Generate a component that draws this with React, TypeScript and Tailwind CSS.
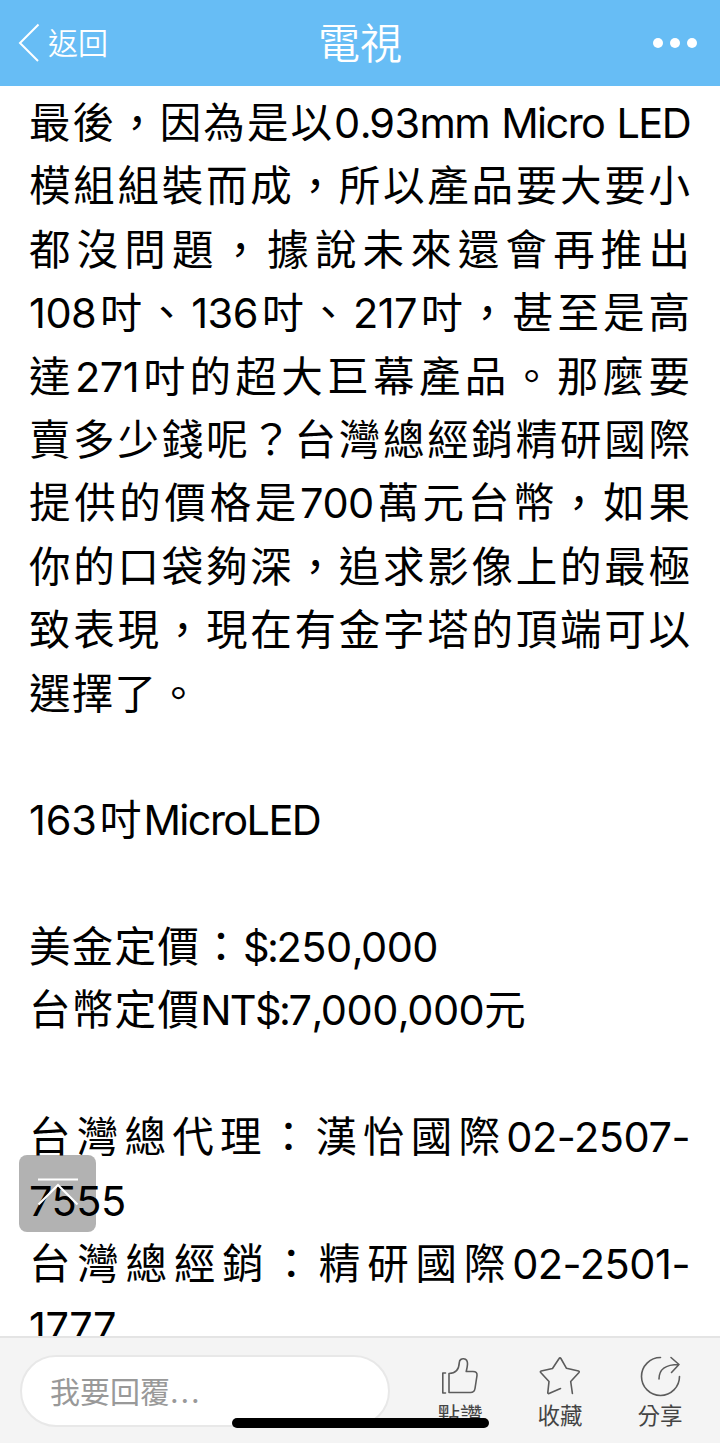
import type { ReactNode } from 'react';

type Line = { text: string; fill?: boolean };

const lines: Line[] = [
  { text: '最後，因為是以0.93mm Micro LED', fill: true },
  { text: '模組組裝而成，所以產品要大要小', fill: true },
  { text: '都沒問題，據說未來還會再推出', fill: true },
  { text: '108吋、136吋、217吋，甚至是高', fill: true },
  { text: '達271吋的超大巨幕產品。那麼要', fill: true },
  { text: '賣多少錢呢？台灣總經銷精研國際', fill: true },
  { text: '提供的價格是700萬元台幣，如果', fill: true },
  { text: '你的口袋夠深，追求影像上的最極', fill: true },
  { text: '致表現，現在有金字塔的頂端可以', fill: true },
  { text: '選擇了。' },
  { text: '' },
  { text: '163吋MicroLED' },
  { text: '' },
  { text: '美金定價：$:250,000' },
  { text: '台幣定價NT$:7,000,000元' },
  { text: '' },
  { text: '台灣總代理：漢怡國際02-2507-', fill: true },
  { text: '7555' },
  { text: '台灣總經銷：精研國際02-2501-', fill: true },
  { text: '1777' },
];

function spacingFor(part: string) {
  if (part === '163') return 'mr-[3px] tracking-[-0.2px]';
  if (/^[0-9-]+$/.test(part)) return 'tracking-[-0.5px]';
  if (part === 'MicroLED') return 'ml-px tracking-[-1.6px]';
  if (/^[A-Za-z ]+$/.test(part)) return 'tracking-[-1.6px]';
  return 'tracking-[-2.6px]';
}

function Action({ label, children }: { label: string; children: ReactNode }) {
  return (
    <button className="flex w-[100px] flex-col items-center">
      <svg
        viewBox="0 0 44 44"
        className="size-11"
        fill="none"
        stroke="#5c5c5c"
        strokeWidth="1.6"
        strokeLinecap="round"
        strokeLinejoin="round"
      >
        {children}
      </svg>
      <span className="mt-[2px] text-[22.5px] leading-8 text-[#444]">{label}</span>
    </button>
  );
}

export default function App() {
  return (
    <div
      lang="zh-Hant"
      className="relative flex h-[1443px] w-[720px] flex-col overflow-hidden bg-white font-['Inter','Noto_Sans_CJK_TC',sans-serif]"
    >
      <header className="grid h-[86px] shrink-0 grid-cols-3 items-center bg-[#67bdf5] text-white">
        <button className="flex items-center pl-[18px]">
          <svg viewBox="0 0 22 40" className="h-10 w-[22px]" fill="none" stroke="currentColor" strokeWidth="2">
            <path d="M20.5 1.5 2 20l18 18" />
          </svg>
          <span className="ml-2 text-[30px] font-[350] leading-none">返回</span>
        </button>
        <h1 className="pt-0.5 text-center text-[42px] font-[350] leading-none">電視</h1>
        <div className="flex justify-end gap-[6.5px] pr-[23px]">
          <i className="size-[10.5px] rounded-full bg-white" />
          <i className="size-[10.5px] rounded-full bg-white" />
          <i className="size-[10.5px] rounded-full bg-white" />
        </div>
      </header>

      <main className="h-[1250px] shrink-0 overflow-hidden pl-[29px] pr-[30px] pt-[6px] text-[41.5px] leading-[63.4px] text-black">
        {lines.map((line, i) => (
          <p
            key={i}
            className={
              line.fill
                ? 'h-[63.4px] whitespace-nowrap text-justify [text-align-last:justify]'
                : 'h-[63.4px] whitespace-nowrap tracking-[1.3px]'
            }
          >
            {line.text.split(/([0-9-]+|[A-Za-z ]+|[.,:$]+)/).map((part, j) =>
              /^[ -~]+$/.test(part) ? (
                <span key={j} className={spacingFor(part)}>{part}</span>
              ) : (
                part
              ),
            )}
          </p>
        ))}
      </main>

      <footer className="flex h-[107px] shrink-0 border-t-2 border-[#e4e4e4] bg-[#f4f4f4] pl-5">
        <div className="mt-[17px] flex h-[72px] w-[370px] items-center rounded-full border-2 border-[#e8e8e8] bg-white pl-7 pt-0.5 text-[30px] text-[#999]">
          我要回覆<span className="tracking-[1.8px]">...</span>
        </div>
        <div className="ml-5 flex pt-4">
          <Action label="點讚">
            <path d="M7.500 19H4.800v20h2.700M11 38.500V19.500c7 0 10-4.500 10.300-11 .300-5.500 8.500-5 8.200 1.500-.100 3-.800 5.500-1.300 7.500H35c3 0 4.300 1.500 4 4l-2 13c-.500 3-2 4-4.500 4Z" />
          </Action>
          <Action label="收藏">
            <path d="M22.500 34.500 11 39.500c-.700.300-1.300-.100-1.200-.900L11 27.500 2.700 18.500c-.600-.600-.400-1.300.500-1.500l11.300-2.500 6.600-10c.500-.800 1.300-.800 1.800 0l5.600 9.800 12 2.700c.800.200 1 .900.500 1.500l-8.300 9 1.700 12" />
          </Action>
          <Action label="分享">
            <path d="M22.500 3.500a19 19 0 1 0 19 19M21 25c0-10 6-14.500 20-14.500M33 3.500l8 7-7.500 8" />
          </Action>
        </div>
      </footer>

      <button className="absolute left-[19px] top-[1155px] flex h-[77px] w-[77px] justify-center rounded-lg bg-black/30">
        <svg viewBox="0 0 42 32" className="mt-[22px] h-8 w-[42px]" fill="none" stroke="white" strokeWidth="2.200">
          <path d="M1 2.500h40M1.500 27.500 21 8l19.500 19.500" />
        </svg>
      </button>
      <div className="absolute left-[232px] top-[1418px] h-[10px] w-[257px] rounded-full bg-black" />
    </div>
  );
}
